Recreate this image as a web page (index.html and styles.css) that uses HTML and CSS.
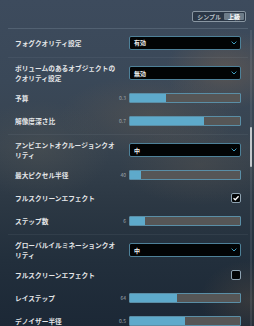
FILE: index.html
```html
<!DOCTYPE html>
<html lang="ja">
<head>
<meta charset="utf-8">
<link rel="stylesheet" href="styles.css">
</head>
<body>
<div class="page">
  <header class="head">
    <div class="toggle"><span class="seg">シンプル</span><span class="seg on">上級</span></div>
  </header>

  <section class="group g-fog">
    <div class="row">
      <div class="lcell"><span class="label">フォグクオリティ設定</span></div>
      <div class="select"><span>有効</span><svg class="chev" viewBox="0 0 6 4" width="6" height="4"><path d="M0.6 0.6 L3 3 L5.4 0.6" fill="none" stroke="#3f9fc2" stroke-width="1"/></svg></div>
    </div>
  </section>

  <section class="group">
    <div class="row tall">
      <div class="lcell"><span class="label">ボリュームのあるオブジェクトのクオリティ設定</span></div>
      <div class="select"><span>無効</span><svg class="chev" viewBox="0 0 6 4" width="6" height="4"><path d="M0.6 0.6 L3 3 L5.4 0.6" fill="none" stroke="#3f9fc2" stroke-width="1"/></svg></div>
    </div>
    <div class="row">
      <div class="lcell"><span class="label">予算</span><span class="val">0.3</span></div>
      <div class="slider"><div class="fill" style="width:33%"></div></div>
    </div>
    <div class="row">
      <div class="lcell"><span class="label">解像度深さ比</span><span class="val">0.7</span></div>
      <div class="slider"><div class="fill" style="width:67%"></div></div>
    </div>
  </section>

  <section class="group">
    <div class="row tall">
      <div class="lcell"><span class="label">アンビエントオクルージョンクオリティ</span></div>
      <div class="select"><span>中</span><svg class="chev" viewBox="0 0 6 4" width="6" height="4"><path d="M0.6 0.6 L3 3 L5.4 0.6" fill="none" stroke="#3f9fc2" stroke-width="1"/></svg></div>
    </div>
    <div class="row">
      <div class="lcell"><span class="label">最大ピクセル半径</span><span class="val">40</span></div>
      <div class="slider"><div class="fill" style="width:10%"></div></div>
    </div>
    <div class="row">
      <div class="lcell"><span class="label">フルスクリーンエフェクト</span></div>
      <div class="ccell"><div class="check on"><svg viewBox="0 0 8 8" width="8" height="8"><path d="M1.5 4.2 L3.3 5.8 L6.6 2.2" fill="none" stroke="#fff" stroke-width="1.3"/></svg></div></div>
    </div>
    <div class="row">
      <div class="lcell"><span class="label">ステップ数</span><span class="val">6</span></div>
      <div class="slider"><div class="fill" style="width:14%"></div></div>
    </div>
  </section>

  <section class="group">
    <div class="row tall">
      <div class="lcell"><span class="label">グローバルイルミネーションクオリティ</span></div>
      <div class="select"><span>中</span><svg class="chev" viewBox="0 0 6 4" width="6" height="4"><path d="M0.6 0.6 L3 3 L5.4 0.6" fill="none" stroke="#3f9fc2" stroke-width="1"/></svg></div>
    </div>
    <div class="row">
      <div class="lcell"><span class="label">フルスクリーンエフェクト</span></div>
      <div class="ccell"><div class="check"></div></div>
    </div>
    <div class="row">
      <div class="lcell"><span class="label">レイステップ</span><span class="val">64</span></div>
      <div class="slider"><div class="fill" style="width:43%"></div></div>
    </div>
    <div class="row">
      <div class="lcell"><span class="label">デノイザー半径</span><span class="val">0.5</span></div>
      <div class="slider"><div class="fill" style="width:50%"></div></div>
    </div>
  </section>

  <div class="scroll"><div class="thumb"></div></div>
</div>
</body>
</html>
```

FILE: styles.css
```css
html, body {
  margin: 0;
  padding: 0;
  width: 254px;
  height: 326px;
  overflow: hidden;
}
body {
  font-family: "Noto Sans CJK JP", "Noto Sans", sans-serif;
  color: #e6e8ea;
  background:
    radial-gradient(ellipse 60px 40px at 225px 70px, rgba(125, 100, 78, 0.45), rgba(125, 100, 78, 0) 100%),
    radial-gradient(ellipse 90px 40px at 150px 115px, rgba(110, 95, 80, 0.35), rgba(110, 95, 80, 0) 100%),
    radial-gradient(ellipse 70px 50px at 40px 150px, rgba(90, 90, 85, 0.35), rgba(90, 90, 85, 0) 100%),
    radial-gradient(ellipse 80px 40px at 200px 165px, rgba(100, 90, 80, 0.3), rgba(100, 90, 80, 0) 100%),
    radial-gradient(ellipse 50px 40px at 250px 300px, rgba(110, 90, 70, 0.3), rgba(110, 90, 70, 0) 100%),
    linear-gradient(180deg, #3d4b5d 0%, #3a4858 25%, #37434f 45%, #2c3844 62%, #222f3c 80%, #1c2836 100%);
}
.page {
  position: relative;
  height: 326px;
  padding: 0 6px 0 8px;
}
.head {
  display: flex;
  justify-content: flex-end;
  padding: 11px 2px 6px 0;
  border-bottom: 1px solid rgba(200, 215, 230, 0.16);
}
.toggle {
  display: flex;
  align-items: stretch;
  height: 11px;
  box-sizing: border-box;
  border: 1px solid #8996a2;
  border-radius: 2px;
  padding: 1px;
  background: rgba(30, 40, 52, 0.55);
}
.seg {
  font-size: 6px;
  line-height: 7px;
  padding: 0 3px;
  color: #bcc3ca;
  font-weight: 700;
}
.seg.on {
  background: #6d7c89;
  color: #ffffff;
  border-radius: 1px;
  padding: 0 4px;
}
.group {
  padding: 2px 7px 2px 7px;
  border-bottom: 1px solid rgba(200, 215, 230, 0.07);
}
.g-fog {
  padding-bottom: 3px;
}
.group:last-of-type {
  border-bottom: none;
}
.row {
  display: grid;
  grid-template-columns: 1fr 112px;
  column-gap: 3px;
  align-items: center;
  min-height: 23px;
}
.row.tall {
  min-height: 26px;
}
.lcell {
  display: flex;
  align-items: center;
  justify-content: space-between;
}
.label {
  font-size: 6.7px;
  line-height: 10px;
  font-weight: 700;
  color: #e4e6e8;
  max-width: 104px;
}
.val {
  font-size: 5px;
  color: #9ea6ad;
}
.select {
  height: 14px;
  box-sizing: border-box;
  border: 1px solid #4e8199;
  border-radius: 2px;
  background: #020405;
  display: flex;
  align-items: center;
  justify-content: space-between;
  padding: 0 3px 0 4px;
}
.select span {
  font-size: 6px;
  color: #f0f0f0;
  font-weight: 700;
}
.chev {
  display: block;
}
.slider {
  height: 10px;
  box-sizing: border-box;
  border: 1px solid #5a8ea6;
  border-radius: 1px;
  background: #565656;
  display: flex;
}
.fill {
  background: #5eaacb;
  height: 100%;
}
.ccell {
  display: flex;
  justify-content: flex-end;
}
.check {
  width: 10px;
  height: 10px;
  box-sizing: border-box;
  border: 1px solid #8ea3b2;
  border-radius: 2px;
  background: #030506;
  display: flex;
  align-items: center;
  justify-content: center;
}
.check svg {
  display: block;
}
.scroll {
  position: absolute;
  left: 250px;
  top: 30px;
  bottom: 0;
  width: 2px;
  background: rgba(190, 200, 210, 0.12);
}
.thumb {
  position: absolute;
  left: -0.5px;
  top: 97px;
  width: 2.5px;
  height: 40px;
  border-radius: 1px;
  background: #c3c7cb;
}
```
